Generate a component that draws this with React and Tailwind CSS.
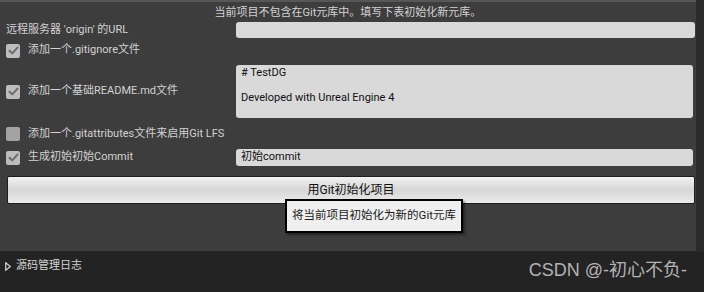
import React from 'react';

const font = { fontFamily: '"Roboto", "Noto Sans CJK SC", sans-serif' };

const CheckBox = ({ checked }) => (
  <div className={`w-[14px] h-[14px] rounded-[2px] flex items-center justify-center ${checked ? 'bg-[#bdbdbd]' : 'bg-[#a3a3a3]'}`}>
    {checked && (
      <svg width="11" height="11" viewBox="0 0 11 11">
        <path d="M1.5 5.8 L4.2 8.4 L9.5 2.6" fill="none" stroke="#6b6b6b" strokeWidth="2" strokeLinecap="round" strokeLinejoin="round" />
      </svg>
    )}
  </div>
);

const Row = ({ className, left, right }) => (
  <div className={`flex items-center ${className}`}>
    <div className="w-[236px] shrink-0 flex items-center h-full">{left}</div>
    {right}
  </div>
);

const CheckLabel = ({ checked, children }) => (
  <div className="flex items-center pl-[6px] gap-[8px]">
    <CheckBox checked={checked} />
    <span>{children}</span>
  </div>
);

export default function App() {
  return (
    <div className="w-[704px] h-[292px] bg-[#232323] flex flex-col overflow-hidden text-[11px] text-[#d2d2d2]" style={font}>
      <div className="flex h-[252px]">
        <div className="relative w-[696px] h-[251px] bg-[#3d3d3d] border-t-2 border-[#575757] flex flex-col">
          {/* header */}
          <div className="h-[16px] mt-[2px] flex items-center justify-center leading-none">
            当前项目不包含在Git元库中。填写下表初始化新元库。
          </div>

          <Row
            className="h-[16px] mt-[2px]"
            left={<span className="pl-[6px]">远程服务器 'origin' 的URL</span>}
            right={<div className="w-[459px] h-[16px] bg-[#d9d9d9] rounded-[3px]" />}
          />

          <Row className="h-[15px] mt-[5px]" left={<CheckLabel checked>添加一个.gitignore文件</CheckLabel>} />

          <Row
            className="h-[53px] mt-[7px]"
            left={<CheckLabel checked>添加一个基础README.md文件</CheckLabel>}
            right={
              <div className="w-[457px] h-[53px] bg-[#d9d9d9] rounded-[3px] px-[5px] pt-[2px] text-[#111] text-[11px] leading-[12.5px]">
                <div># TestDG</div>
                <div>&nbsp;</div>
                <div>Developed with Unreal Engine 4</div>
              </div>
            }
          />

          <Row className="h-[14px] mt-[9px]" left={<CheckLabel>添加一个.gitattributes文件来启用Git LFS</CheckLabel>} />

          <Row
            className="h-[17px] mt-[8px]"
            left={<CheckLabel checked>生成初始初始Commit</CheckLabel>}
            right={
              <div className="w-[457px] h-[17px] bg-[#d9d9d9] rounded-[3px] px-[5px] flex items-center text-[#111]">
                初始commit
              </div>
            }
          />

          <div className="ml-[7px] mt-[10px] w-[688px] h-[28px] border border-[#1e1e1e] rounded-[2px] bg-gradient-to-b from-[#f2f2f2] via-[#d6d6d6] to-[#ebebeb] flex items-center justify-center text-[12px] text-[#111]">
            用Git初始化项目
          </div>

          {/* tooltip */}
          <div className="absolute left-[285px] top-[197px] w-[178px] h-[34px] bg-[#efefef] border-2 border-black flex items-center justify-center text-[11.5px] text-[#1a1a1a] shadow-[2px_2px_2px_rgba(0,0,0,0.4)]">
            将当前项目初始化为新的Git元库
          </div>
        </div>
        <div className="flex-1 bg-[#2a2a2a]" />
      </div>

      <div className="flex-1 flex items-center justify-between pl-[5px] pr-[17px] pb-[1px]">
        <div className="flex items-center gap-[5px] -mt-[10px]">
          <svg width="6" height="9" viewBox="0 0 6 9">
            <path d="M0.7 0.7 L5.3 4.5 L0.7 8.3 Z" fill="none" stroke="#cfcfcf" strokeWidth="1.2" />
          </svg>
          <span className="text-[11px] text-[#d4d4d4]">源码管理日志</span>
        </div>
        <span className="text-[18px] text-[#b3b3b3] mt-[-2px]" style={{ fontFamily: '"Liberation Sans", "Noto Sans CJK SC", sans-serif' }}>
          CSDN @-初心不负-
        </span>
      </div>
    </div>
  );
}
